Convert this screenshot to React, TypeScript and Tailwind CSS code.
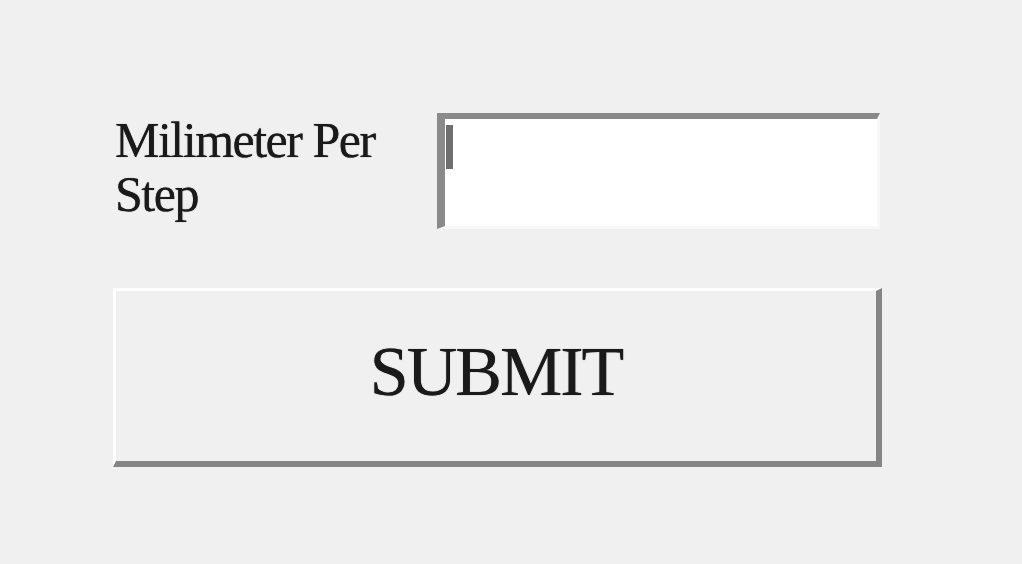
const App = () => {
  return (
    <div
      className="w-[1022px] h-[564px] bg-[#f0f0f0] pt-[113px] pl-[113px] text-[#1a1a1a]"
      style={{ fontFamily: '"Liberation Serif", "Times New Roman", serif' }}
    >
      <div className="flex items-start">
        <div className="w-[324px] pl-[2px] text-[50px] leading-[54px] tracking-[-1.5px] [text-shadow:0_0_0.8px_#222]">
          Milimeter Per Step
        </div>
        <div className="w-[443px] h-[116px] bg-white border-t-[6px] border-l-[8px] border-r-[3px] border-b-[3px] border-t-[#8a8a8a] border-l-[#8a8a8a] border-r-[#f8f8f8] border-b-[#f8f8f8] pt-[6px] pl-[1px]">
          <div className="w-[7px] h-[44px] bg-[#6e6e6e]"></div>
        </div>
      </div>
      <button className="mt-[59px] w-[769px] h-[179px] bg-[#f0f0f0] border-t-[3px] border-l-[3px] border-r-[6px] border-b-[6px] border-t-white border-l-white border-r-[#858585] border-b-[#858585] flex items-center justify-center pb-[9px] text-[70px] leading-none tracking-[-2px] text-[#1a1a1a] [text-shadow:0_0_0.8px_#222]">
        SUBMIT
      </button>
    </div>
  );
};

export default App;
